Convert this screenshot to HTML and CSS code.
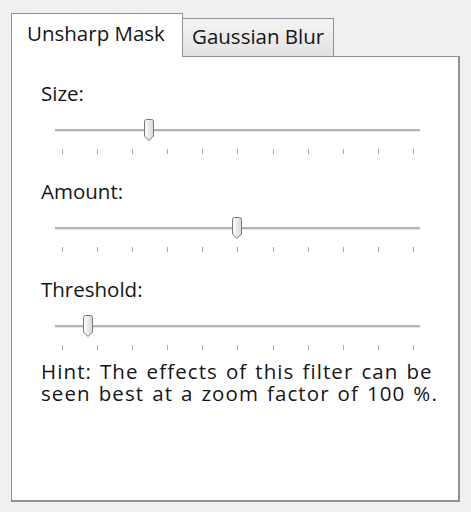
FILE: index.html
```html
<!DOCTYPE html>
<html lang="en">
<head>
<meta charset="UTF-8">
<link rel="stylesheet" href="styles.css">
<title>Sharpen</title>
</head>
<body>

<div id="filters">
  <div class="tab-strip">
    <div class="tab active">Unsharp Mask</div>
    <div class="tab">Gaussian Blur</div>
  </div>

  <div class="tab-page">
    <div class="field">
      <div class="label">Size:</div>
      <div class="slider">
        <div class="track"></div>
        <svg class="thumb" style="left: 88px" width="12" height="24" viewBox="0 0 12 24"><use href="#thumb"/></svg>
        <div class="ticks"><i></i><i></i><i></i><i></i><i></i><i></i><i></i><i></i><i></i><i></i><i></i></div>
      </div>
    </div>

    <div class="field">
      <div class="label">Amount:</div>
      <div class="slider">
        <div class="track"></div>
        <svg class="thumb" style="left: 176px" width="12" height="24" viewBox="0 0 12 24"><use href="#thumb"/></svg>
        <div class="ticks"><i></i><i></i><i></i><i></i><i></i><i></i><i></i><i></i><i></i><i></i><i></i></div>
      </div>
    </div>

    <div class="field">
      <div class="label">Threshold:</div>
      <div class="slider">
        <div class="track"></div>
        <svg class="thumb" style="left: 27px" width="12" height="24" viewBox="0 0 12 24"><use href="#thumb"/></svg>
        <div class="ticks"><i></i><i></i><i></i><i></i><i></i><i></i><i></i><i></i><i></i><i></i><i></i></div>
      </div>
    </div>

    <p class="hint">Hint: The effects of this filter can be seen best at a zoom factor of 100 %.</p>
  </div>
</div>

<!-- shared slider thumb shape -->
<svg width="0" height="0" class="defs">
  <defs>
    <linearGradient id="thumb-fill" x1="0" y1="0" x2="1" y2="0">
      <stop offset="0" stop-color="#ffffff"/>
      <stop offset="1" stop-color="#d8d8d8"/>
    </linearGradient>
    <g id="thumb">
      <path d="M1.5 3.5 Q1.5 1.5 3.5 1.5 H8.5 Q10.5 1.5 10.5 3.5 V18 L6 22.5 L1.5 18 Z" fill="url(#thumb-fill)" stroke="#767676"/>
    </g>
  </defs>
</svg>

</body>
</html>
```

FILE: styles.css
```css
body {
  margin: 0;
  background-color: #f0f0f0;
  font-family: "Open Sans", "Noto Sans", sans-serif;
  font-size: 20.5px;
  color: #151515;
}
#filters {
  padding: 13px 11px 10px 11px;
}
.tab-strip {
  display: flex;
  align-items: flex-end;
  height: 43px;
}
.tab {
  box-sizing: border-box;
  height: 38px;
  padding: 4px 0 0 9px;
  width: 151px;
  border: 1px solid #8e9197;
  border-left: none;
  border-bottom: none;
  background: linear-gradient(#f4f4f4, #e2e2e2);
  line-height: 26px;
}
.tab.active {
  position: relative;
  height: 44px;
  width: 172px;
  margin-bottom: -1px;
  padding: 6px 0 0 15px;
  border-left: 1px solid #8e9197;
  background: #fff;
  z-index: 1;
}
.tab-page {
  box-sizing: border-box;
  height: 446px;
  border: 1px solid #8e9197;
  border-right-width: 2px;
  border-bottom-width: 2px;
  background: #fff;
  padding: 24px 0 0 29px;
}
.field {
  margin-bottom: 25px;
}
.field:last-of-type {
  margin-bottom: 10px;
}
.label {
  line-height: 24px;
}
.slider {
  position: relative;
  width: 365px;
  height: 36px;
  margin: 13px 0 0 14px;
}
.track {
  position: absolute;
  left: 0;
  right: 0;
  top: 11px;
  height: 2px;
  background: #b4b4b4;
  border-bottom: 1px solid #e6e6e6;
}
.thumb {
  position: absolute;
  top: 0;
}
.ticks {
  position: absolute;
  left: 7px;
  right: 6px;
  top: 31px;
  display: flex;
  justify-content: space-between;
}
.ticks i {
  display: block;
  width: 1px;
  height: 5px;
  background: #a8a8a8;
}
.hint {
  margin: 0;
  width: 400px;
  line-height: 22px;
  letter-spacing: 1.1px;
  word-spacing: 1.5px;
}
.defs {
  position: absolute;
}
```
